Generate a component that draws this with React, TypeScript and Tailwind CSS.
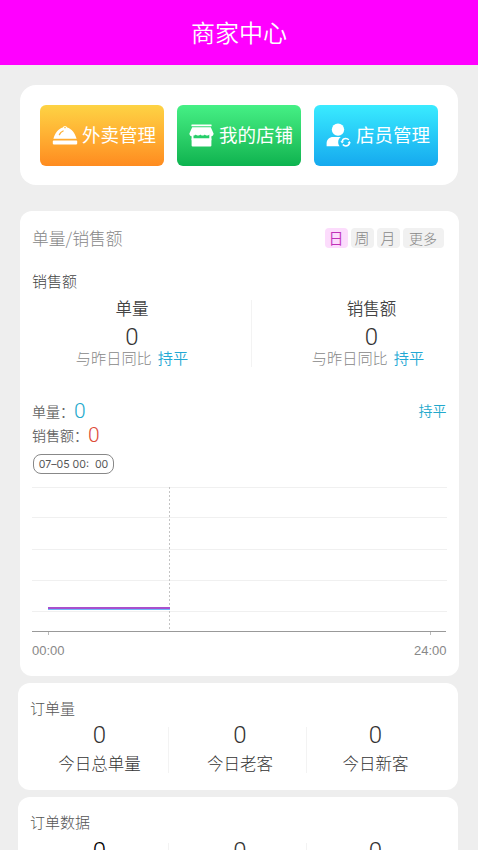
import React from "react";

const CloudMealIcon = () => (
  <svg width="26" height="20" viewBox="0 0 26 20" fill="none">
    <path
      d="M10.8 2.6a2.3 2.3 0 0 1 4.4 0C19.6 4 22.7 7.4 24.600 13.800H1.400C3.300 7.400 6.400 4 10.800 2.600z"
      fill="#fff"
    />
    <path d="M7.400 9.600c.8-1.700 2-2.900 3.700-3.600" stroke="#fdb035" strokeWidth="1.300" strokeLinecap="round" />
    <circle cx="13" cy="2.600" r="0.800" fill="#fdbb3a" />
    <rect x="0.800" y="15.600" width="24.400" height="3.800" rx="0.800" fill="#fff" />
  </svg>
);

const StoreIcon = () => (
  <svg width="25" height="23" viewBox="0 0 25 23" fill="#fff">
    <rect x="2.400" y="0.400" width="20.200" height="1.900" rx="0.500" />
    <path d="M3.200 3.200h18.600l2.800 6.200c0 1.600-1 2.700-2.200 2.900v4H2.600v-4C1.400 12.100.4 11 .4 9.400z" />
    <path
      d="M4.500 11.600c1 0 1.800-.3 2.300-1.100.5.8 1.300 1.100 2.300 1.100s1.700-.3 2.200-1.100c.5.8 1.300 1.100 2.300 1.100s1.700-.3 2.200-1.100c.5.8 1.300 1.100 2.300 1.100s1.700-.3 2.200-1.100v4H4.500z"
      fill="#26ce69"
    />
    <path d="M2.600 14.500h19.800v7a1 1 0 0 1-1 1H3.600a1 1 0 0 1-1-1z" />
  </svg>
);

const StaffIcon = () => (
  <svg width="25" height="24" viewBox="0 0 25 24" fill="none">
    <circle cx="12" cy="6.600" r="6.200" fill="#fff" />
    <path
      d="M.6 23.200v-2.600c0-4 2.800-6.500 6.600-6.500h7.600c-1.700 1.300-2.600 3-2.600 5.100 0 1.500.5 2.900 1.400 4z"
      fill="#fff"
    />
    <path
      d="M16.100 18.400c.4-1.700 1.900-2.900 3.700-2.900 1.300 0 2.300.5 3 1.400M23.500 20c-.4 1.700-1.900 2.900-3.700 2.900-1.300 0-2.300-.5-3-1.400"
      stroke="#fff"
      strokeWidth="1.500"
    />
    <path d="M14.500 18.100l1.500 2.300 2-1.800zM25 20.300l-1.500-2.300-2 1.800z" fill="#fff" />
  </svg>
);

const actions = [
  { label: "外卖管理", icon: <CloudMealIcon />, bg: "from-[#fdd344] to-[#fe8b1f]" },
  { label: "我的店铺", icon: <StoreIcon />, bg: "from-[#45f085] to-[#0bb34f]" },
  { label: "店员管理", icon: <StaffIcon />, bg: "from-[#3aebff] to-[#16a9ee]" },
];

const periods = ["日", "周", "月"];

const gridLines = [0.5, 30.5, 62.5, 93.5, 124.5];

const Compare = ({ title, shift }: { title: string; shift?: boolean }) => (
  <div className="flex w-[150px] flex-col items-center">
    <span className="text-[16.500px] font-[350] leading-6 text-[#444]">{title}</span>
    <span className="mt-[7px] font-['Roboto',sans-serif] text-[24px] font-light leading-5 text-[#333]">
      0
    </span>
    <div
      className={`flex gap-[6px] whitespace-nowrap text-[15.200px] font-light leading-5 text-[#888] ${shift ? "pr-[7px]" : ""}`}
    >
      与昨日同比
      <span className="font-[350] text-[#22a8d4]">持平</span>
    </div>
  </div>
);

const columns = ["w-[137px]", "w-[137px] pl-[5px]", "w-[137px]"];

const Stats = ({
  title,
  labels,
  dark,
}: {
  title: string;
  labels: string[];
  dark?: boolean;
}) => (
  <div className="h-[107px] w-[439.500px] shrink-0 rounded-xl bg-white pt-[15px]">
    <div className="pl-3 text-[15px] font-light leading-5 text-[#555]">{title}</div>
    <div className={`flex pl-[13px] ${dark ? "mt-1" : "mt-[2px]"}`}>
      {labels.map((label, i) => (
        <div key={label} className="flex">
          {i > 0 && <div className="mt-[7px] h-[46px] w-px bg-[#f3f3f3]" />}
          <div className={`flex flex-col items-center ${columns[i]}`}>
            <span
              className={`mt-px font-['Roboto',sans-serif] text-[24px] font-light leading-7 ${dark && i === 0 ? "text-black" : "text-[#333]"}`}
            >
              0
            </span>
            <span className="mt-[2px] text-[16.500px] font-light leading-6 text-[#333]">
              {label}
            </span>
          </div>
        </div>
      ))}
    </div>
  </div>
);

const Chart = () => (
  <svg className="mt-[13px] block" width="415" height="150" viewBox="0 0 415 150" fill="none">
    {gridLines.map((y) => (
      <line key={y} x1="0" x2="415" y1={y} y2={y} stroke="#f0f0f0" />
    ))}
    <line x1="137.500" x2="137.500" y1="0" y2="144" stroke="#c4c4c4" strokeDasharray="2 2" />
    <line x1="0" x2="414" y1="144.500" y2="144.500" stroke="#999" />
    <path d="M16.500 145v3M398.500 145v3" stroke="#bbb" />
    <rect x="16" y="122" width="122" height="1" fill="#6fb8f8" />
    <rect x="16" y="120" width="122" height="2" fill="#a850cc" />
  </svg>
);

export default function App() {
  return (
    <div className="h-[850px] w-[478px] overflow-hidden bg-[#eee] font-['Noto_Sans_CJK_SC',sans-serif]">
      <header className="flex h-[65px] items-center justify-center bg-[#ff00ff] pb-[2px] text-[24px] font-[350] text-white">
        商家中心
      </header>

      <div className="ml-5 mt-5 flex h-[100px] w-[438px] items-center justify-center gap-[13px] rounded-2xl bg-white">
        {actions.map((item) => (
          <button
            key={item.label}
            className={`flex h-[61px] w-[124px] items-center whitespace-nowrap rounded-md bg-linear-to-b pl-[12px] text-[18.500px] text-white ${item.bg}`}
          >
            <span className="flex w-[30px] shrink-0">{item.icon}</span>
            {item.label}
          </button>
        ))}
      </div>

      <div className="ml-[19.500px] mt-[26px] h-[465px] w-[439px] rounded-xl bg-white pl-[12.500px] pr-3 pt-[17px]">
        <div className="flex items-center justify-between">
          <span className="text-[16.800px] font-light leading-5 text-[#888]">单量/销售额</span>
          <div className="mr-[3px] flex gap-[3px] text-[15px] font-light leading-5 text-[#888]">
            {periods.map((p, i) => (
              <span
                key={p}
                className={`w-[23px] rounded text-center ${i === 0 ? "bg-[#fcdcfc] font-[350] text-[#c030b8]" : "bg-[#f1f1f1]"}`}
              >
                {p}
              </span>
            ))}
            <span className="w-[41px] rounded bg-[#f1f1f1] text-center text-[14px]">更多</span>
          </div>
        </div>
        <div className="mt-[23px] text-[15px] font-light leading-5 text-[#444]">销售额</div>
        <div className="mt-[5px] flex justify-between pl-[25px]">
          <Compare title="单量" />
          <div className="mt-[4px] h-[67px] w-px bg-[#f3f3f3]" />
          <Compare title="销售额" shift />
        </div>

        <div className="mt-[32px] flex h-6 items-center justify-between text-[14px] text-[#666]">
          <div className="flex items-center font-[350]">
            单量：
            <span className="pt-px font-['Roboto',sans-serif] text-[21px] font-light text-[#22a8cc]">0</span>
          </div>
          <span className="pb-px font-[350] text-[#22a8cc]">持平</span>
        </div>
        <div className="flex h-6 items-center text-[14px] font-[350] text-[#666]">
          销售额：
          <span className="pt-px font-['Roboto',sans-serif] text-[21px] font-light text-[#dd4b39]">0</span>
        </div>
        <div className="ml-px mt-[7px] flex h-5 w-[81px] items-center justify-center whitespace-pre rounded-lg border border-[#888] pt-px font-['Inter','Noto_Sans_CJK_SC',sans-serif] text-[10.600px] text-[#555]">
          07–05 00:  00
        </div>
        <Chart />
        <div className="mt-[4px] flex justify-between font-['Liberation_Sans',sans-serif] text-[13px] leading-5 text-[#888]">
          <span>00:00</span>
          <span>24:00</span>
        </div>
      </div>

      <div className="ml-[18px] mt-[7px] flex flex-col gap-[7px]">
        <Stats title="订单量" labels={["今日总单量", "今日老客", "今日新客"]} />
        <Stats title="订单数据" labels={["今日总单量", "今日老客", "今日新客"]} dark />
      </div>
    </div>
  );
}
